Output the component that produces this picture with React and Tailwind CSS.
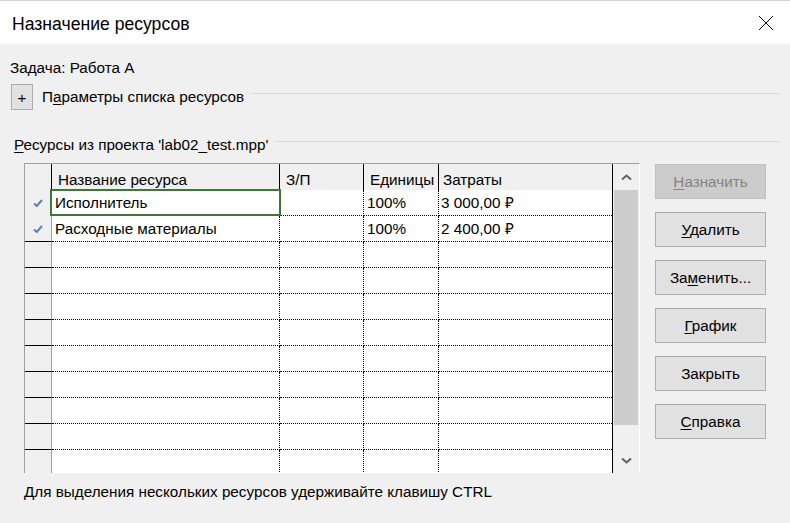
import React from "react";

/* ================= DATA ================= */
const rows = [
  { checked: true, name: "Исполнитель", zp: "", units: "100%", cost: "3 000,00 ₽", selected: true },
  { checked: true, name: "Расходные материалы", zp: "", units: "100%", cost: "2 400,00 ₽" },
  ...Array.from({ length: 9 }, () => ({ checked: false, name: "", zp: "", units: "", cost: "" })),
];

const buttons = [
  { pre: "", key: "Н", post: "азначить", disabled: true },
  { pre: "", key: "У", post: "далить" },
  { pre: "За", key: "м", post: "енить..." },
  { pre: "", key: "Г", post: "рафик" },
  { pre: "Закрыть", key: "", post: "" },
  { pre: "", key: "С", post: "правка" },
];

function Check() {
  return (
    <svg width="10" height="8" viewBox="0 0 10 8">
      <path d="M1 4.5 L3.8 7 L9 1" fill="none" stroke="#5a82b4" strokeWidth="2" />
    </svg>
  );
}

function Chevron({ down }) {
  return (
    <svg width="11" height="7" viewBox="0 0 11 7">
      <path
        d={down ? "M1 1.5 L5.5 5.5 L10 1.5" : "M1 5.5 L5.5 1.5 L10 5.5"}
        fill="none"
        stroke="#606060"
        strokeWidth="2"
      />
    </svg>
  );
}

export default function App() {
  return (
    <div className="w-[790px] h-[523px] overflow-hidden bg-[#f0f0f0] text-black font-['Liberation_Sans',Arial,sans-serif] text-[15.25px]">
      {/* ================= TITLE BAR ================= */}
      <div className="h-[44px] bg-white border-t border-[#d4d4d4] flex items-center justify-between pl-[12px] pr-[16px]">
        <span className="text-[17.6px] mt-[4px]">Назначение ресурсов</span>
        <svg width="16" height="16" viewBox="0 0 16 16" className="mt-[1px]">
          <path d="M1 1 L15 15 M15 1 L1 15" stroke="#000" strokeWidth="1" />
        </svg>
      </div>

      {/* ================= TASK ================= */}
      <div className="pl-[10px] pt-[14px] leading-[20px]">Задача: Работа А</div>

      <div className="flex items-start mt-[6px] pl-[11px] pr-[10px]">
        <div className="w-[22px] h-[26px] bg-[#e1e1e1] border border-[#adadad] flex items-center justify-center text-[15px] leading-none">
          +
        </div>
        <span className="ml-[9px] mt-[3px] leading-[20px]">
          П<span className="underline underline-offset-2">а</span>раметры списка ресурсов
        </span>
        <div className="flex-1 h-px bg-[#dadada] mt-[9px] ml-[6px]" />
      </div>

      <div className="flex items-start mt-[25px] pl-[14px] pr-[10px]">
        <span className="leading-[20px]">
          <span className="underline underline-offset-2">Р</span>есурсы из проекта 'lab02_test.mpp'
        </span>
        <div className="flex-1 h-px bg-[#dadada] mt-[6px] ml-[6px]" />
      </div>

      {/* ================= GRID + BUTTONS ================= */}
      <div className="flex items-start mt-[8px] pl-[24px]">
        <div className="flex h-[310px] border-t border-l border-r border-t-[#a0a0a0] border-l-[#a0a0a0] border-r-white overflow-hidden">
          <div className="flex flex-col">
            {/* header */}
            <div className="grid grid-cols-[27px_228px_84px_75px_173px] h-[26px] bg-[#f0f0f0] shrink-0">
              <div className="border-r border-black" />
              <div className="border-r border-black flex items-end pl-[6px] leading-[20px]">Название ресурса</div>
              <div className="border-r border-black flex items-end pl-[6px] leading-[20px]">З/П</div>
              <div className="border-r border-black flex items-end pl-[6px] leading-[20px]">Единицы</div>
              <div className="flex items-end pl-[4px] leading-[20px]">Затраты</div>
            </div>
            {/* rows */}
            {rows.map((r, i) => (
              <div key={i} className="grid grid-cols-[27px_228px_84px_75px_173px] h-[26px] shrink-0">
                <div
                  className={`bg-[#f0f0f0] border-r border-r-[#a0a0a0] flex items-center justify-center ${
                    i === 0 ? "" : "border-b border-b-black"
                  }`}
                >
                  {r.checked && <Check />}
                </div>
                <div className="relative bg-white border-r border-b border-dotted border-black flex items-center pl-[3px] leading-[20px]">
                  {r.name}
                  {r.selected && (
                    <div className="absolute -left-[2px] -top-[1px] -right-[2px] -bottom-[1px] border-2 border-[#3b7a33]" />
                  )}
                </div>
                <div className="bg-white border-r border-b border-dotted border-black flex items-center pl-[4px] leading-[20px]">
                  {r.zp}
                </div>
                <div className="bg-white border-r border-b border-dotted border-black flex items-center pl-[3px] leading-[20px]">
                  {r.units}
                </div>
                <div className="bg-white border-b border-dotted border-black flex items-center pl-[2px] leading-[20px]">
                  {r.cost}
                </div>
              </div>
            ))}
          </div>

          {/* scrollbar */}
          <div className="w-[27px] border-l border-black bg-[#f0f0f0] flex flex-col">
            <div className="h-[26px] flex items-center justify-center shrink-0">
              <Chevron />
            </div>
            <div className="flex-1 flex flex-col px-px">
              <div className="h-[235px] bg-[#cdcdcd]" />
            </div>
            <div className="h-[26px] flex items-center justify-center shrink-0">
              <Chevron down />
            </div>
          </div>
        </div>

        <div className="flex flex-col gap-[13px] ml-[15px] pt-px">
          {buttons.map((b, i) => (
            <div
              key={i}
              className={`w-[111px] h-[35px] border flex items-center justify-center leading-[20px] ${
                b.disabled
                  ? "bg-[#cccccc] border-[#bfbfbf] text-[#838383]"
                  : "bg-[#e1e1e1] border-[#adadad]"
              }`}
            >
              <span>
                {b.pre}
                {b.key && <span className="underline underline-offset-2">{b.key}</span>}
                {b.post}
              </span>
            </div>
          ))}
        </div>
      </div>

      {/* ================= FOOTER ================= */}
      <div className="pl-[24px] mt-[9px] leading-[20px]">
        Для выделения нескольких ресурсов удерживайте клавишу CTRL
      </div>
    </div>
  );
}
